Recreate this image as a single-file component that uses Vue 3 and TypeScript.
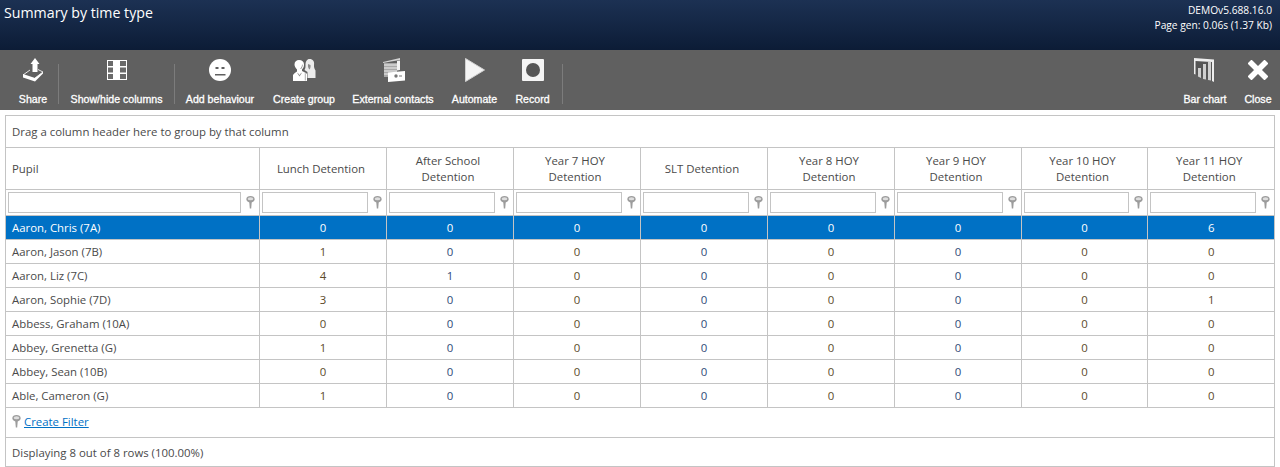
<script setup lang="ts">
const columns: string[] = [
  'Lunch Detention',
  'After School Detention',
  'Year 7 HOY Detention',
  'SLT Detention',
  'Year 8 HOY Detention',
  'Year 9 HOY Detention',
  'Year 10 HOY Detention',
  'Year 11 HOY Detention',
]
const rows: { name: string; vals: number[]; selected?: boolean }[] = [
  { name: 'Aaron, Chris (7A)', vals: [0, 0, 0, 0, 0, 0, 0, 6], selected: true },
  { name: 'Aaron, Jason (7B)', vals: [1, 0, 0, 0, 0, 0, 0, 0] },
  { name: 'Aaron, Liz (7C)', vals: [4, 1, 0, 0, 0, 0, 0, 0] },
  { name: 'Aaron, Sophie (7D)', vals: [3, 0, 0, 0, 0, 0, 0, 1] },
  { name: 'Abbess, Graham (10A)', vals: [0, 0, 0, 0, 0, 0, 0, 0] },
  { name: 'Abbey, Grenetta (G)', vals: [1, 0, 0, 0, 0, 0, 0, 0] },
  { name: 'Abbey, Sean (10B)', vals: [0, 0, 0, 0, 0, 0, 0, 0] },
  { name: 'Able, Cameron (G)', vals: [1, 0, 0, 0, 0, 0, 0, 0] },
]
function cellColor(col: number): string {
  return col === 1 || col === 3 || col === 5 ? 'blue' : 'warm'
}
</script>

<template>
  <div class="page">
    <header class="top">
      <div class="title">Summary by time type</div>
      <div class="meta">
        <div>DEMOv5.688.16.0</div>
        <div>Page gen: 0.06s (1.37 Kb)</div>
      </div>
    </header>

    <nav class="bar">
      <button class="tool t-share">
        <div class="ico">
          <svg width="22" height="24" viewBox="0 0 22 24">
            <path fill="#fff" d="M13 0l4.500 6h-2v8h-5V6h-2z" />
            <path fill="none" stroke="#e6e6e6" d="M1 17l7-5M16 11.500l5 2.500-8 6" />
            <path fill="#fff" d="M1 16l12 4 8-6v1.500l-8 8L1 19.500z" />
          </svg>
        </div>
        <span>Share</span>
      </button>
      <i class="sep"></i>
      <button class="tool t-show">
        <div class="ico">
          <svg width="20" height="20" viewBox="0 0 20 20">
            <rect width="20" height="20" fill="#fff" />
            <path fill="#6a6a6a" d="M1 1h5v5H1zM1 7.500h5v5H1zM1 14h5v5H1zM13 1h6v5h-6zM13 7.500h6v5h-6zM13 14h6v5h-6z" />
          </svg>
        </div>
        <span>Show/hide columns</span>
      </button>
      <i class="sep"></i>
      <button class="tool t-beh">
        <div class="ico">
          <svg width="22" height="22" viewBox="0 0 22 22">
            <circle cx="11" cy="11" r="11" fill="#fff" />
            <rect x="6.500" y="8" width="3" height="2" fill="#606060" />
            <rect x="12.500" y="8" width="3" height="2" fill="#606060" />
            <rect x="6" y="15" width="10.500" height="1.500" fill="#606060" />
          </svg>
        </div>
        <span>Add behaviour</span>
      </button>
      <button class="tool t-group">
        <div class="ico">
          <svg width="23" height="22" viewBox="0 0 23 22">
            <path fill="#ececec" d="M16.500 0c3.500 0 5 2.500 4.500 6-.2 2 .5 4 1.500 5.500V19h-8v-6l-3-2c1-1.500 1-3 1-5 0-3.500 1.500-6 4-6z" />
            <path fill="#8a8a8a" d="M15 5l2.500 1c.3 2.500-.3 3.500-1 4.500-1-1-1.800-2.500-1.500-5.500z" />
            <path fill="#fff" d="M6 1c3 0 5 1.500 5 4.500 0 2-.5 3.500-2 5v1.500l4 2 1 1V22H0v-6c1-1.500 2.500-2.500 4-3.500V10.500C2.500 9 1.500 7 1.500 5.500 1.500 2.500 3.500 1 6 1z" />
            <path fill="#8a8a8a" d="M9 5.500l.7.3c0 1.800-.7 3.200-1.700 4.200H7.200C8.200 8.800 9 7.500 9 5.500zM4.500 13.500l2 2.500 2-2.500v1l-2 3-2-3z" />
            <path fill="#606060" d="M11.800 13.500l1 1v7h-1z" opacity=".5" />
          </svg>
        </div>
        <span>Create group</span>
      </button>
      <button class="tool t-ext">
        <div class="ico">
          <svg width="23" height="24" viewBox="0 0 23 24">
            <path fill="#d4d4d4" d="M1 4L18 0v2L9 3.500 1 5z" />
            <path fill="#f2f2f2" d="M15 3l3-.5V12l-3 .5z" />
            <path fill="#a8a8a8" d="M2 5h13v14H2z" />
            <path fill="#eee" d="M2 6.500h13v1H2zM2 9.500h13v1H2zM2 12.500h13v1H2zM2 15.500h5v1H2z" />
            <path fill="#fff" d="M6 14.500l17-1.500v9.500L6 24z" />
            <circle cx="14" cy="18" r="1.700" fill="#777" />
            <rect x="17" y="17.500" width="3" height="1" fill="#777" />
          </svg>
        </div>
        <span>External contacts</span>
      </button>
      <button class="tool t-auto">
        <div class="ico">
          <svg width="20" height="24" viewBox="0 0 20 24">
            <path fill="#f4f4f4" stroke="#d0d0d0" d="M.500 .500l19 11.500-19 11.500z" />
          </svg>
        </div>
        <span>Automate</span>
      </button>
      <button class="tool t-rec">
        <div class="ico">
          <svg width="22" height="22" viewBox="0 0 22 22">
            <rect width="22" height="22" rx="1" fill="#f4f4f4" />
            <circle cx="11" cy="11" r="7" fill="#555" />
          </svg>
        </div>
        <span>Record</span>
      </button>
      <i class="sep"></i>
      <div class="spacer"></div>
      <button class="tool t-chart">
        <div class="ico">
          <svg width="20" height="24" viewBox="0 0 20 24">
            <path fill="#555" d="M1.500 3L18 4v19L1.500 16z" />
            <path fill="#eee" d="M0 0l20 1.500V24l-2-1V4L1.500 3v13.500L0 16z" />
            <path fill="#cfcfcf" d="M4 10h3v10l-3-1.500zM9 6h3v15.500l-3-.5zM14 4h3v18.500l-3-.5z" />
          </svg>
        </div>
        <span>Bar chart</span>
      </button>
      <button class="tool t-close">
        <div class="ico">
          <svg width="20" height="20" viewBox="0 0 20 20">
            <path stroke="#fff" stroke-width="5.600" stroke-linecap="square" d="M3.500 3.500l13 13M16.500 3.500l-13 13" />
          </svg>
        </div>
        <span>Close</span>
      </button>
    </nav>

    <main class="grid">
      <div class="group">Drag a column header here to group by that column</div>
      <table>
        <colgroup>
          <col class="c-name" />
          <col v-for="c in columns" :key="c" class="c-val" />
        </colgroup>
        <thead>
          <tr class="heads">
            <th class="name">Pupil</th>
            <th v-for="c in columns" :key="c">{{ c }}</th>
          </tr>
          <tr class="filters">
            <td v-for="n in 9" :key="n">
              <div class="filter">
                <input type="text" />
                <svg class="pin" width="9" height="13" viewBox="0 0 9 13">
                  <path fill="#9c9c9c" d="M.300 3.200C.300 1 2.300 0 4.500 0s4.200 1 4.200 3.200c0 2-2.200 2.800-3 3.300L5.200 12.500H3.800L3.300 6.500C2.500 6 .300 5.200 .300 3.200z" />
                  <ellipse cx="4.500" cy="2.700" rx="2.800" ry="1.500" fill="#dedede" />
                </svg>
              </div>
            </td>
          </tr>
        </thead>
        <tbody>
          <tr v-for="r in rows" :key="r.name" :class="{ selected: r.selected }">
            <td class="name">{{ r.name }}</td>
            <td v-for="(v, i) in r.vals" :key="i" :class="cellColor(i)">{{ v }}</td>
          </tr>
        </tbody>
      </table>
      <div class="create">
        <svg class="pin" width="9" height="13" viewBox="0 0 9 13">
          <path fill="#9c9c9c" d="M.300 3.200C.300 1 2.300 0 4.500 0s4.200 1 4.200 3.200c0 2-2.200 2.800-3 3.300L5.200 12.500H3.800L3.300 6.500C2.500 6 .300 5.200 .300 3.200z" />
          <ellipse cx="4.500" cy="2.700" rx="2.800" ry="1.500" fill="#dedede" />
        </svg>
        <a href="#">Create Filter</a>
      </div>
      <div class="foot">Displaying 8 out of 8 rows (100.00%)</div>
    </main>
  </div>
</template>

<style>
html, body { margin: 0; background: #fff; }
</style>

<style scoped>
.page { width: 1280px; height: 467px; overflow: hidden; font-family: "Open Sans", sans-serif; font-size: 11.4px; color: #4a4a4a; }
.top { height: 50px; box-sizing: border-box; display: flex; justify-content: space-between; padding: 4px 8px 0 4px; color: #fff; background: linear-gradient(#1c3153, #0c1c36); }
.title { font-size: 14.2px; line-height: 18px; }
.meta { text-align: right; font-size: 10.2px; line-height: 15px; margin-top: -1px; }
.bar { height: 60px; display: flex; align-items: stretch; background: #606060; }
.tool { border: 0; background: none; padding: 0; color: #fff; font: 400 10.6px "Liberation Sans", sans-serif; display: flex; flex-direction: column; align-items: center; }
.ico { height: 24px; margin-top: 8px; display: flex; align-items: center; justify-content: center; }
.ico svg { display: block; }
.tool span { margin-top: auto; padding-bottom: 4px; line-height: 13px; -webkit-text-stroke: 0.3px #fff; white-space: nowrap; }
.sep { width: 1px; background: #7c7c7c; margin: 14px 0 0; height: 40px; }
.spacer { flex: 1; }
.t-share { width: 58px; padding-left: 8px; }
.t-show { width: 115px; }
.t-beh { width: 90px; }
.t-group { width: 78px; }
.t-ext { width: 100px; }
.t-auto { width: 63px; }
.t-rec { width: 56px; padding-right: 3px; }
.t-chart { width: 60px; margin-right: 3px; }
.t-chart .ico { margin-left: -3px; }
.t-close { width: 40px; margin-right: 2px; }
.grid { margin: 5px 5px 0; border: 1px solid #c4c4c4; }
.group { height: 31px; line-height: 31px; padding-left: 6px; border-bottom: 1px solid #c4c4c4; }
table { width: 100%; table-layout: fixed; border-collapse: collapse; }
.c-name { width: 253px; }
.c-val { width: 127px; }
.c-val:nth-child(8) { width: 126px; }
th, td { border: 1px solid #c4c4c4; padding: 0; text-align: center; font-weight: 400; box-sizing: border-box; }
tr > :first-child { border-left: 0; }
tr > :last-child { border-right: 0; }
thead tr:first-child > * { border-top: 0; }
.heads th { height: 41px; line-height: 16px; padding: 2px 18px 0 15px; }
.heads th.name { text-align: left; padding: 2px 6px 0; }
.filters td { height: 26px; padding: 0 4px 0 2px; }
.filter { display: flex; align-items: center; gap: 5px; }
.filter input { flex: 1; min-width: 0; height: 21px; box-sizing: border-box; border: 1px solid #c4c4c4; padding: 0; background: #fff; }
.pin { flex: none; display: block; }
tbody tr { height: 24px; }
tbody td { line-height: 16px; padding: 1px 0 0 1px; }
tbody td.name { text-align: left; padding: 1px 6px 0; }
.warm { color: #5c4a2a; }
.blue { color: #2f4a78; }
tr.selected td { background: #0071c5; color: #fff; }
.create { height: 30px; box-sizing: border-box; display: flex; align-items: center; gap: 3px; padding: 0 0 1px 6px; border-bottom: 1px solid #c4c4c4; }
.create a { color: #0071c5; }
.foot { height: 28px; box-sizing: border-box; line-height: 28px; padding: 1px 0 0 6px; }
</style>
